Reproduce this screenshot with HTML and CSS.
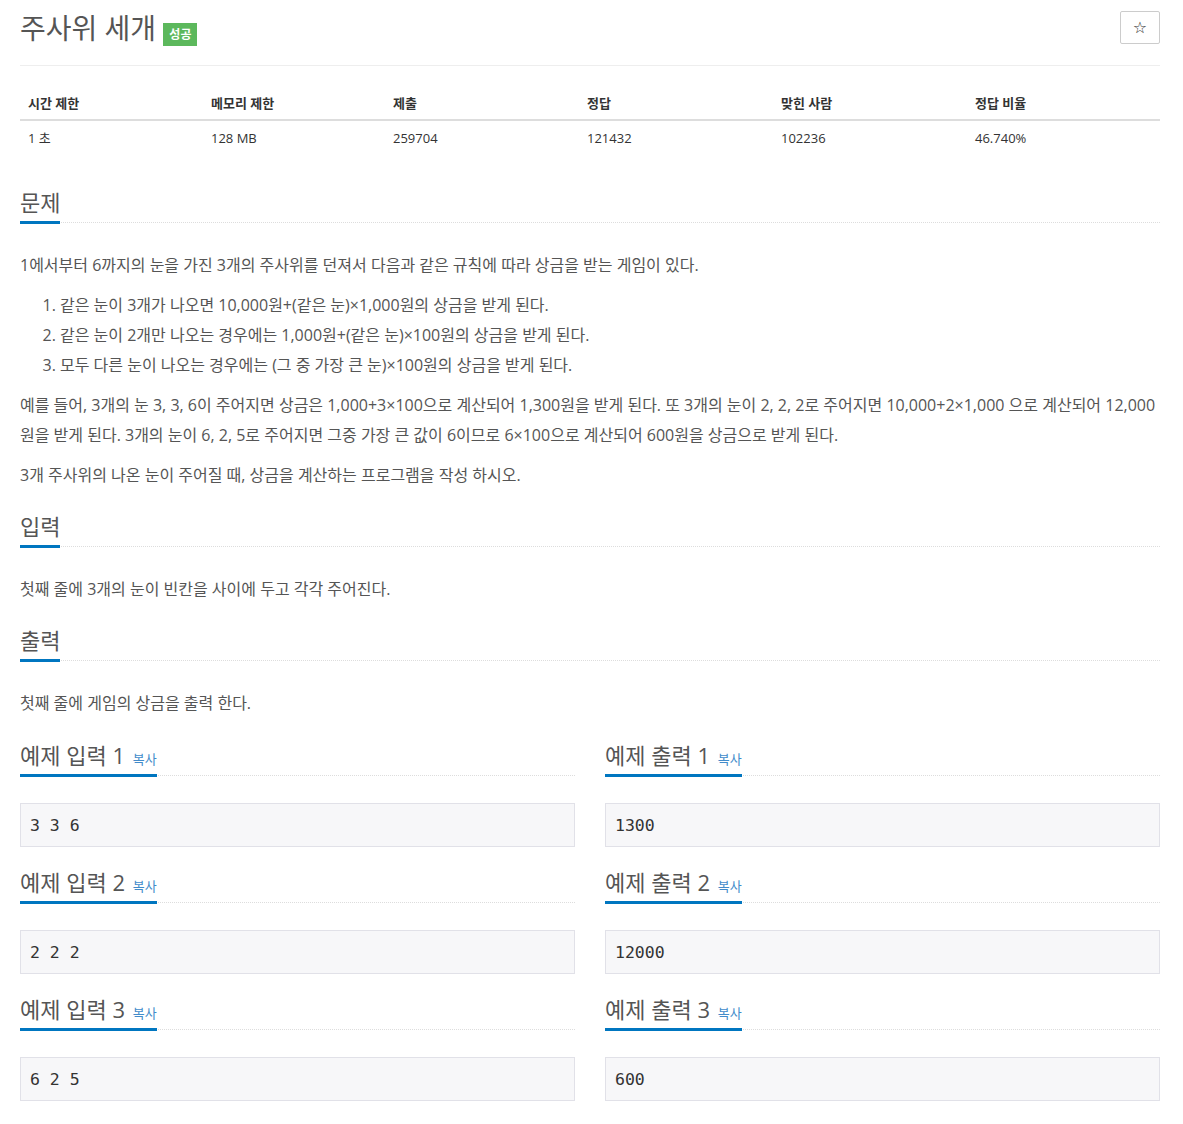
FILE: index.html
```html
<!DOCTYPE html>
<html lang="ko">
<head>
<meta charset="utf-8">
<title>주사위 세개</title>
<link rel="stylesheet" href="styles.css">
</head>
<body>
<div class="page">
  <div class="page-header">
    <h1 class="title">주사위 세개 <span class="badge">성공</span></h1>
    <button class="star-btn" type="button">☆</button>
  </div>

  <table class="info">
    <thead>
      <tr>
        <th class="c1">시간 제한</th>
        <th class="c2">메모리 제한</th>
        <th class="c3">제출</th>
        <th class="c4">정답</th>
        <th class="c5">맞힌 사람</th>
        <th class="c6">정답 비율</th>
      </tr>
    </thead>
    <tbody>
      <tr>
        <td>1 초</td>
        <td>128 MB</td>
        <td>259704</td>
        <td>121432</td>
        <td>102236</td>
        <td>46.740%</td>
      </tr>
    </tbody>
  </table>

  <section class="section first">
    <h2 class="headline"><span class="hl">문제</span></h2>
    <div class="text">
      <p>1에서부터 6까지의 눈을 가진 3개의 주사위를 던져서 다음과 같은 규칙에 따라 상금을 받는 게임이 있다.</p>
      <ol>
        <li>같은 눈이 3개가 나오면 10,000원+(같은 눈)×1,000원의 상금을 받게 된다.</li>
        <li>같은 눈이 2개만 나오는 경우에는 1,000원+(같은 눈)×100원의 상금을 받게 된다.</li>
        <li>모두 다른 눈이 나오는 경우에는 (그 중 가장 큰 눈)×100원의 상금을 받게 된다.</li>
      </ol>
      <p>예를 들어, 3개의 눈 3, 3, 6이 주어지면 상금은 1,000+3×100으로 계산되어 1,300원을 받게 된다. 또 3개의 눈이 2, 2, 2로 주어지면 10,000+2×1,000 으로 계산되어 12,000원을 받게 된다. 3개의 눈이 6, 2, 5로 주어지면 그중 가장 큰 값이 6이므로 6×100으로 계산되어 600원을 상금으로 받게 된다.</p>
      <p>3개 주사위의 나온 눈이 주어질 때, 상금을 계산하는 프로그램을 작성 하시오.</p>
    </div>
  </section>

  <section class="section">
    <h2 class="headline"><span class="hl">입력</span></h2>
    <div class="text">
      <p>첫째 줄에 3개의 눈이 빈칸을 사이에 두고 각각 주어진다.</p>
    </div>
  </section>

  <section class="section">
    <h2 class="headline"><span class="hl">출력</span></h2>
    <div class="text">
      <p>첫째 줄에 게임의 상금을 출력 한다.</p>
    </div>
  </section>

  <div class="samples">
    <div class="sample">
      <h2 class="headline"><span class="hl">예제 입력 1 <a class="copy" href="#">복사</a></span></h2>
      <pre class="data">3 3 6</pre>
    </div>
    <div class="sample">
      <h2 class="headline"><span class="hl">예제 출력 1 <a class="copy" href="#">복사</a></span></h2>
      <pre class="data">1300</pre>
    </div>
    <div class="sample">
      <h2 class="headline"><span class="hl">예제 입력 2 <a class="copy" href="#">복사</a></span></h2>
      <pre class="data">2 2 2</pre>
    </div>
    <div class="sample">
      <h2 class="headline"><span class="hl">예제 출력 2 <a class="copy" href="#">복사</a></span></h2>
      <pre class="data">12000</pre>
    </div>
    <div class="sample">
      <h2 class="headline"><span class="hl">예제 입력 3 <a class="copy" href="#">복사</a></span></h2>
      <pre class="data">6 2 5</pre>
    </div>
    <div class="sample">
      <h2 class="headline"><span class="hl">예제 출력 3 <a class="copy" href="#">복사</a></span></h2>
      <pre class="data">600</pre>
    </div>
  </div>
</div>
</body>
</html>
```

FILE: styles.css
```css
html, body {
  margin: 0;
  padding: 0;
  background: #fff;
}
body {
  font-family: "Open Sans", "Noto Sans CJK KR", sans-serif;
  color: #555;
}
.page {
  padding: 0 23px 0 20px;
}
.page-header {
  display: flex;
  justify-content: space-between;
  align-items: flex-start;
  border-bottom: 1px solid #eee;
  height: 65px;
}
.title {
  margin: 9px 0 0 0;
  font-size: 28px;
  line-height: 38px;
  font-weight: 400;
  color: #555;
}
.badge {
  display: inline-block;
  vertical-align: 0px;
  background: #5cb85c;
  color: #fff;
  font-size: 12px;
  font-weight: 700;
  line-height: 23px;
  height: 23px;
  padding: 0 6px;
  margin-left: 0;
}
.star-btn {
  margin-top: 11px;
  width: 40px;
  height: 33px;
  border: 1px solid #ccc;
  border-radius: 2px;
  background: #fff;
  color: #333;
  font-size: 16px;
  line-height: 1;
  padding: 0;
  font-family: "DejaVu Sans", sans-serif;
}
.info {
  width: 100%;
  border-collapse: collapse;
  margin-top: 20px;
  font-size: 13px;
  color: #333;
}
.info th, .info td {
  text-align: left;
  padding: 8px;
  line-height: 20px;
}
.info th {
  font-weight: 700;
  font-size: 13px;
  padding-top: 7px;
  padding-bottom: 6px;
  border-bottom: 2px solid #ddd;
}
.info td {
  padding-top: 7px;
}
.c1 { width: 167px; }
.c2 { width: 166px; }
.c3 { width: 178px; }
.c4 { width: 178px; }
.c5 { width: 178px; }
.c6 { width: auto; }

.section.first {
  margin-top: 31px;
}
.section {
  padding-bottom: 11px;
}
.headline {
  margin: 0 0 27px 0;
  font-size: 22px;
  line-height: 30px;
  font-weight: 400;
  color: #555;
  border-bottom: 1px dotted #ddd;
}
.hl {
  display: block;
  width: fit-content;
  padding-bottom: 4px;
  border-bottom: 3px solid #0076c0;
  margin-bottom: -2px;
}
.text {
  font-size: 16px;
  line-height: 30px;
}
.text p {
  margin: 0 0 10px 0;
}
.text ol {
  margin: 0 0 10px 0;
  padding-left: 40px;
}
.samples {
  display: grid;
  grid-template-columns: 1fr 1fr;
  column-gap: 30px;
  padding-top: 1px;
}
.sample {
  margin-bottom: 20px;
}
.copy {
  font-size: 13px;
  line-height: 1;
  margin-left: 2px;
  color: #428bca;
  text-decoration: none;
}
.data {
  margin: 0;
  padding: 11px 9px 10px 9px;
  background: #f7f7f9;
  border: 1px solid #e1e1e8;
  font-family: "DejaVu Sans Mono", monospace;
  font-size: 16.5px;
  line-height: 21px;
  color: #333;
}
```
